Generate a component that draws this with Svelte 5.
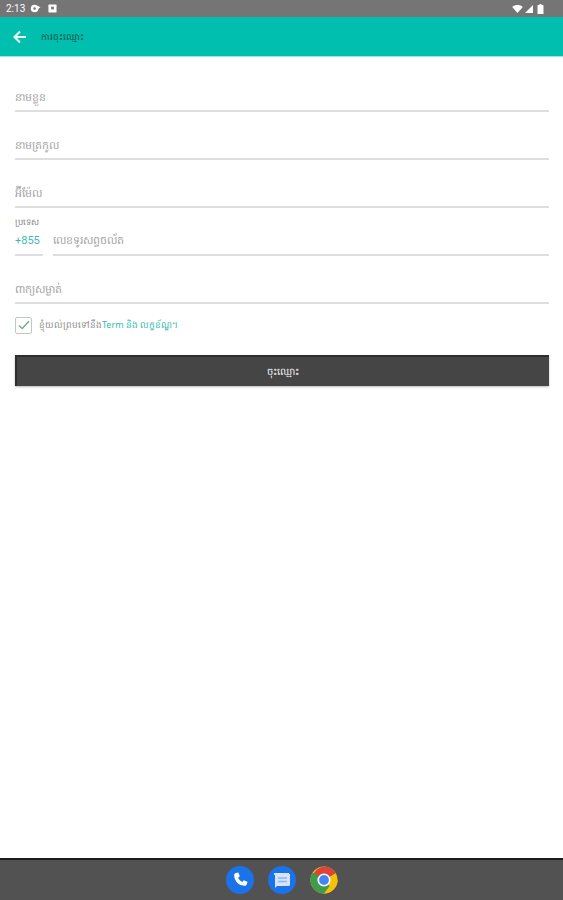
<script>
  const fields = ["នាមខ្លួន", "នាមត្រកូល", "អ៊ីម៉ែល"];
</script>

<div class="screen">
  <div class="status">
    <span class="time">2:13</span>
    <svg width="11" height="9" viewBox="0 0 12 10"><circle cx="5" cy="5" r="4.2" fill="#fff" /><path d="M8 2l3.500 1.500L8 6z" fill="#fff" /><circle cx="5" cy="5" r="1.400" fill="#777" /></svg>
    <svg class="square" width="9" height="9" viewBox="0 0 10 10"><rect x="0.500" y="0.500" width="9" height="9" rx="1" fill="#fff" /><rect x="3.500" y="3" width="3" height="3" fill="#777" /></svg>
    <span class="spacer"></span>
    <svg width="11" height="8" viewBox="0 0 12 9"><path d="M0 2.200C3.400-.7 8.600-.7 12 2.200L6 9z" fill="#fff" /></svg>
    <svg class="signal" width="8" height="8" viewBox="0 0 9 9"><path d="M9 0v9H0z" fill="#fff" /></svg>
    <svg class="battery" width="7" height="10" viewBox="0 0 6 10"><path d="M2 0h2v1h1.400c.3 0 .6.3.6.6V10H0V1.600C0 1.300.3 1 .6 1H2z" fill="#fff" /></svg>
  </div>

  <header class="toolbar">
    <svg width="14" height="14" viewBox="0 0 14 14"><path d="M13 7H2M7 1.500 1.500 7 7 12.500" fill="none" stroke="#e6fbf7" stroke-width="2.200" /></svg>
    <span class="title">ការចុះឈ្មោះ</span>
  </header>

  <form class="form">
    {#each fields as field}
      <div class="field">{field}</div>
    {/each}

    <div class="phone">
      <div class="code">
        <span class="code-label">ប្រទេស</span>
        <span class="code-value">+855</span>
      </div>
      <div class="field number">លេខទូរសព្ទចល័ត</div>
    </div>

    <div class="field">ពាក្យសម្ងាត់</div>

    <div class="agree">
      <span class="check">
        <svg width="12" height="10" viewBox="0 0 12 10"><path d="M1 5.500 4.200 8.500 11 1.200" fill="none" stroke="#7fa98a" stroke-width="1.500" /></svg>
      </span>
      <span>ខ្ញុំយល់ព្រមទៅនឹង<span class="link">Term និង លក្ខខ័ណ្ឌ។</span></span>
    </div>

    <button type="button" class="submit">ចុះឈ្មោះ</button>
  </form>

  <div class="dock">
    <span class="app">
      <svg width="18" height="18" viewBox="0 0 24 24"><path d="M6.600 2.800 9.800 2l2 5-2.300 1.900c.9 2.300 3.300 4.700 5.600 5.600l1.900-2.300 5 2-.8 3.200c-.3 1.300-1.500 2.400-3 2.400C10.500 19.800 4.200 13.500 4.200 5.800c0-1.500 1.100-2.700 2.400-3z" fill="#fff" /></svg>
    </span>
    <span class="app">
      <svg width="20" height="18" viewBox="0 0 20 18"><path d="M3 3h15v10.500c0 .8-.6 1.500-1.500 1.500H5L3 17V5z" fill="#d6e4fb" /><path d="M2 3h15" stroke="#d6e4fb" stroke-width="2" /><path d="M6 7h9M6 10.500h9" stroke="#8fb6f2" stroke-width="1.300" /></svg>
    </span>
    <svg width="28" height="28" viewBox="0 0 30 30">
      <circle cx="15" cy="15" r="14.500" fill="#f4c20d" />
      <path d="M15 .5A14.500 14.500 0 0 1 27.600 7.800L15 15H2.400A14.500 14.500 0 0 1 15 .5z" fill="#db4437" />
      <path d="M2.900 7 15 15l-6.500 13A14.500 14.500 0 0 1 2.900 7z" fill="#3f9c4c" />
      <path d="M15 15h14.500A14.500 14.500 0 0 1 15 29.500z" fill="#f4c20d" />
      <path d="M15 15 8.200 27.800a14.500 14.500 0 0 0 6.800 1.700l6-8z" fill="#3f9c4c" />
      <circle cx="15" cy="15" r="7" fill="#fff" />
      <circle cx="15" cy="15" r="5.300" fill="#4285f4" />
    </svg>
  </div>
</div>

<style>
  :global(body) {
    margin: 0;
    background: #fff;
  }

  .screen {
    width: 563px;
    height: 900px;
    display: flex;
    flex-direction: column;
    font-family: "Noto Sans", "Liberation Sans", sans-serif;
    overflow: hidden;
  }

  .status {
    height: 17px;
    background: #757575;
    display: flex;
    align-items: center;
    gap: 5px;
    padding: 0 19px 0 6px;
    color: #fff;
    font-size: 10px;
  }

  .time {
    font-family: Roboto, sans-serif;
  }

  .square {
    margin-left: 2px;
  }

  .spacer {
    flex: 1;
  }

  .signal {
    margin-left: -3px;
  }

  .battery {
    margin-left: -1px;
  }

  .toolbar {
    height: 39px;
    background: #00bfae;
    display: flex;
    align-items: center;
    gap: 14px;
    padding-left: 13px;
    border-bottom: 1px solid #9fe6dc;
  }

  .title {
    font-size: 9px;
    color: #0b4f48;
  }

  .form {
    flex: 1;
    display: flex;
    flex-direction: column;
    padding: 17px 14px 0 15px;
  }

  .field {
    height: 38px;
    margin-bottom: 10px;
    box-sizing: border-box;
    padding-top: 14px;
    line-height: 18px;
    border-bottom: 2px solid #dedede;
    color: #a3a3a3;
    font-size: 11px;
  }

  .phone {
    display: flex;
    gap: 10px;
    height: 48px;
  }

  .code {
    width: 28px;
    height: 38px;
    display: flex;
    flex-direction: column;
    border-bottom: 2px solid #dedede;
    box-sizing: border-box;
  }

  .code-label {
    font-size: 8.500px;
    color: #8a8a8a;
    line-height: 8px;
  }

  .code-value {
    font-size: 11px;
    color: #3cbcac;
    line-height: 16px;
    margin-top: 7px;
    font-family: Roboto, sans-serif;
  }

  .number {
    flex: 1;
    margin-bottom: 0;
    padding-top: 13px;
  }

  .agree {
    display: flex;
    align-items: center;
    gap: 7px;
    font-size: 9px;
    color: #8d8d8d;
    height: 18px;
    margin-top: 2px;
  }

  .check {
    width: 15px;
    height: 15px;
    border: 1.500px solid #b9cdbf;
    border-radius: 2px;
    display: flex;
    align-items: center;
    justify-content: center;
    flex: none;
  }

  .link {
    color: #2fbcab;
  }

  .submit {
    margin-top: 21px;
    height: 31px;
    background: #454545;
    border: none;
    border-top: 2px solid #2e2e2e;
    border-left: 2px solid #2e2e2e;
    border-radius: 0;
    box-shadow: 0 1px 2px #bbb;
    color: #f2f2f2;
    font-family: inherit;
    font-size: 10px;
    padding: 0;
  }

  .dock {
    height: 40px;
    background: #525252;
    border-top: 2px solid #1c1c1c;
    display: flex;
    align-items: center;
    justify-content: center;
    gap: 14px;
    padding-left: 1px;
  }

  .app {
    width: 28px;
    height: 28px;
    border-radius: 50%;
    background: #1a73e8;
    display: flex;
    align-items: center;
    justify-content: center;
  }
</style>
